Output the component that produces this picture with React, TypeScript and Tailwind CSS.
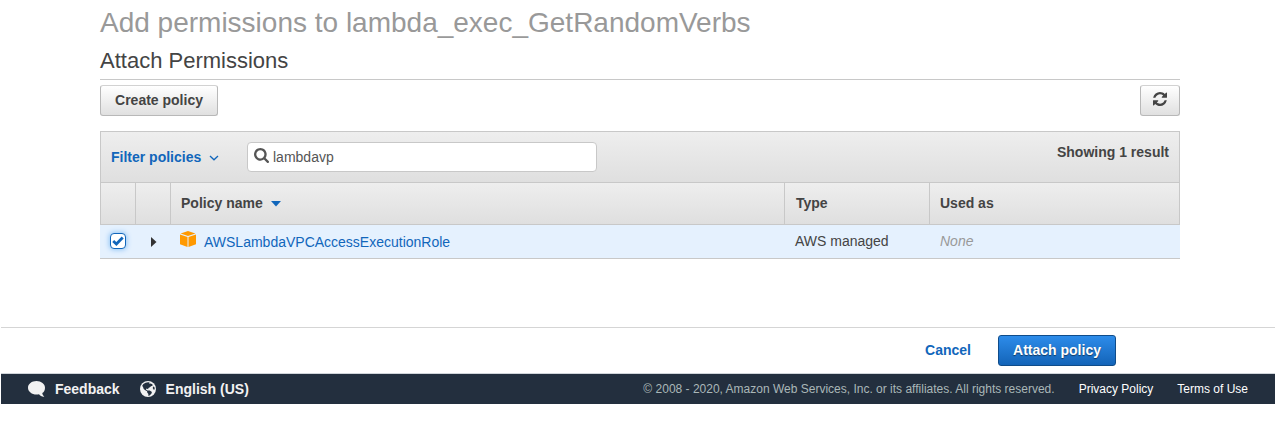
import React from "react";

function RefreshIcon() {
  return (
    <svg width="14" height="14" viewBox="0 128 1536 1536" preserveAspectRatio="none" fill="#444" className="block">
      <path d="M1511 1056q0 5-1 7-64 268-268 434.500t-478 166.500q-146 0-282.500-55t-243.500-157l-129 129q-19 19-45 19t-45-19-19-45v-448q0-26 19-45t45-19h448q26 0 45 19t19 45-19 45l-137 137q71 66 161 102t187 36q134 0 250-65t186-179q11-17 53-117 8-23 30-23h192q13 0 22.500 9.500t9.500 22.500zm25-800v448q0 26-19 45t-45 19h-448q-26 0-45-19t-19-45 19-45l138-138q-148-137-349-137-134 0-250 65t-186 179q-11 17-53 117-8 23-30 23h-199q-13 0-22.500-9.500t-9.500-22.500v-7q65-268 270-434.500t480-166.500q146 0 284 55.500t245 156.500l130-129q19-19 45-19t45 19 19 45z" />
    </svg>
  );
}

function SearchIcon() {
  return (
    <svg width="15" height="15" viewBox="64 128 1664 1664" fill="#555" className="block shrink-0">
      <path d="M1216 832q0-185-131.500-316.500t-316.500-131.500-316.500 131.500-131.500 316.500 131.500 316.500 316.500 131.500 316.500-131.500 131.500-316.500zm512 832q0 52-38 90t-90 38q-54 0-90-38l-343-342q-179 124-399 124-143 0-273.500-55.500t-225-150-150-225-55.500-273.500 55.500-273.500 150-225 225-150 273.500-55.500 273.500 55.500 225 150 150 225 55.500 273.500q0 220-124 399l343 343q37 37 37 90z" />
    </svg>
  );
}

function CubeIcon() {
  return (
    <svg width="16" height="16" viewBox="0 0 16 16" className="block shrink-0" fill="#f90">
      <path d="M8 0 15.400 2.500 8 4.900.6 2.500z" />
      <path d="M0 3.600 7.500 6V16L0 13.200z" />
      <path d="M16 3.600 8.500 6V16L16 13.200z" />
    </svg>
  );
}

function SpeechIcon() {
  return (
    <svg width="17" height="16" viewBox="0 0 17 16" fill="#f2f2f2" className="block">
      <path d="M8.500 0C13.200 0 17 3 17 6.700c0 2.500-1 4.200-2.700 5.400.1 1.400.8 2.600 2 3.600-2.200.2-4.100-.7-5.300-2.400-.8.200-1.600.2-2.500.2C3.800 13.500 0 10.500 0 6.700S3.800 0 8.500 0z" />
    </svg>
  );
}

function GlobeIcon() {
  return (
    <svg width="16" height="16" viewBox="0 0 16 16" className="block">
      <circle cx="8" cy="8" r="8" fill="#f2f2f2" />
      <path
        d="M2.200 4.800 3.400 3 5.600 1.700 8.200 1.200 9.600 1.600 9.200 2.800 10.600 2.400 12.400 3.300 12.600 4.700 11 5.200 9.500 6.600 8.400 7 8.200 8.200 6.600 7.600 5.900 8.500 7.400 9.500 9.800 9.600 11.900 10.900 11.500 12.400 9.600 14.600 8.200 14.800 8.400 13 7.200 11.600 7.100 10.300 5.300 9.200 3.700 8.100 3.100 6.300z"
        fill="#232f3e"
      />
      <path d="M13 5.600 14.400 5.900 14.800 8.200 13.700 8.800 12.800 7.300z" fill="#232f3e" />
    </svg>
  );
}

const HEAD = "border-r border-[#c8c8c8] flex items-center pb-[2px]";

export default function App() {
  return (
    <div className="h-[421px] w-[1275px] overflow-hidden bg-white font-['Liberation_Sans',Arial,sans-serif] text-[14px] leading-[20px] text-[#444]">
      <main className="ml-[100px] flex h-[327px] w-[1080px] flex-col">
        <h1 className="h-[43px] pt-[7px] text-[28px] leading-[32px] whitespace-nowrap text-[#999]">
          Add permissions to lambda_exec_GetRandomVerbs
        </h1>
        <h2 className="h-[37px] border-b border-[#c8c8c8] pt-[4px] text-[22px] leading-[28px]">
          Attach Permissions
        </h2>
        <div className="mt-[5px] flex justify-between">
          <button className="h-[31px] w-[118px] rounded-[3px] border border-[#b8b8b8] border-t-[#d2d2d2] bg-linear-to-b from-white to-[#e0e0e0] pb-px font-bold">
            Create policy
          </button>
          <button
            aria-label="Refresh"
            className="flex h-[31px] w-[40px] items-center justify-center rounded-[3px] border border-[#b8b8b8] border-t-[#d2d2d2] bg-linear-to-b from-white to-[#e0e0e0] pb-[3px]"
          >
            <RefreshIcon />
          </button>
        </div>

        <section className="mt-[15px]">
          <div className="flex h-[51px] border border-b-0 border-[#c8c8c8] bg-linear-to-b from-[#eee] to-[#dfdfdf]">
            <div className="flex w-[146px] items-center pl-[10px] font-bold text-[#1166bb]">
              Filter policies
              <svg width="10" height="6" viewBox="0 0 10 6" className="mt-[2px] ml-[8px]">
                <path d="M1 1 5 4.800 9 1" fill="none" stroke="#1166bb" strokeWidth="1.300" />
              </svg>
            </div>
            <div className="mt-[10px] flex h-[30px] w-[350px] items-center rounded-[4px] border border-[#c8c8c8] bg-white pl-[6px] text-[#555]">
              <div className="pb-[3px]">
                <SearchIcon />
              </div>
              <span className="ml-[4px]">lambdavp</span>
            </div>
            <div className="ml-auto pt-[10px] pr-[10px] font-bold">Showing 1 result</div>
          </div>
          <div className="flex h-[43px] border border-r-0 border-[#c8c8c8] bg-linear-to-b from-[#eee] to-[#dfdfdf] font-bold">
            <div className={`${HEAD} w-[35px]`} />
            <div className={`${HEAD} w-[35px]`} />
            <div className={`${HEAD} w-[614px] pl-[10px]`}>
              Policy name
              <svg width="10" height="6" viewBox="0 0 10 6" className="mt-[2px] ml-[8px]">
                <path d="M0 0H10L5 5.500z" fill="#1166bb" />
              </svg>
            </div>
            <div className={`${HEAD} w-[145px] pl-[11px]`}>Type</div>
            <div className={`${HEAD} w-[250px] pl-[10px]`}>Used as</div>
          </div>
          <div className="flex h-[34px] items-center border-b border-[#c8c8c8] bg-[#e5f1fe]">
            <div className="w-[50px] pb-[2px] pl-[10px]">
              <div className="flex size-[16px] items-center justify-center rounded-[4px] border border-[#1166bb] bg-white shadow-[0_0_5px_1px_#94c6f5]">
                <svg width="12" height="10" viewBox="0 0 12 10">
                  <path d="M1.200 5 4.400 8 10.700 1.500" fill="none" stroke="#1166bb" strokeWidth="2.800" />
                </svg>
              </div>
            </div>
            <div className="w-[30px]">
              <svg width="6" height="10" viewBox="0 0 6 10" className="mt-px ml-px block">
                <path d="M0 0 5.500 5 0 10z" fill="#333" />
              </svg>
            </div>
            <div className="flex w-[615px] items-center text-[#1166bb]">
              <div className="mr-[8px] pb-[5px]">
                <CubeIcon />
              </div>
              <span className="pt-px">AWSLambdaVPCAccessExecutionRole</span>
            </div>
            <div className="w-[145px] pb-px">AWS managed</div>
            <div className="pb-px text-[#999] italic">None</div>
          </div>
        </section>
      </main>

      <div className="ml-px flex h-[46px] items-center justify-end border-t border-[#d5d5d5] pr-[159px] font-bold">
        <a className="mr-[27px] pb-[2px] text-[#1166bb]">Cancel</a>
        <button className="h-[31px] w-[118px] rounded-[3px] border border-[#0f4c8a] bg-linear-to-b from-[#2d8cea] to-[#1364b8] pb-px text-white [text-shadow:0_1px_1px_rgba(0,0,0,0.5)]">
          Attach policy
        </button>
      </div>
      <footer className="ml-px flex h-[31px] items-center border-t border-[#d0d5da] bg-[#232f3e] text-[12px] text-white">
        <div className="flex items-center pl-[27px] text-[14px] font-bold text-[#f2f2f2]">
          <SpeechIcon />
          <span className="ml-[10px]">Feedback</span>
          <span className="ml-[20px]">
            <GlobeIcon />
          </span>
          <span className="ml-[10px]">English (US)</span>
        </div>
        <div className="ml-auto flex pr-[27px]">
          <span className="text-[#aab7b8]">
            © 2008 - 2020, Amazon Web Services, Inc. or its affiliates. All rights reserved.
          </span>
          <span className="ml-[24px]">Privacy Policy</span>
          <span className="ml-[24px]">Terms of Use</span>
        </div>
      </footer>
    </div>
  );
}
